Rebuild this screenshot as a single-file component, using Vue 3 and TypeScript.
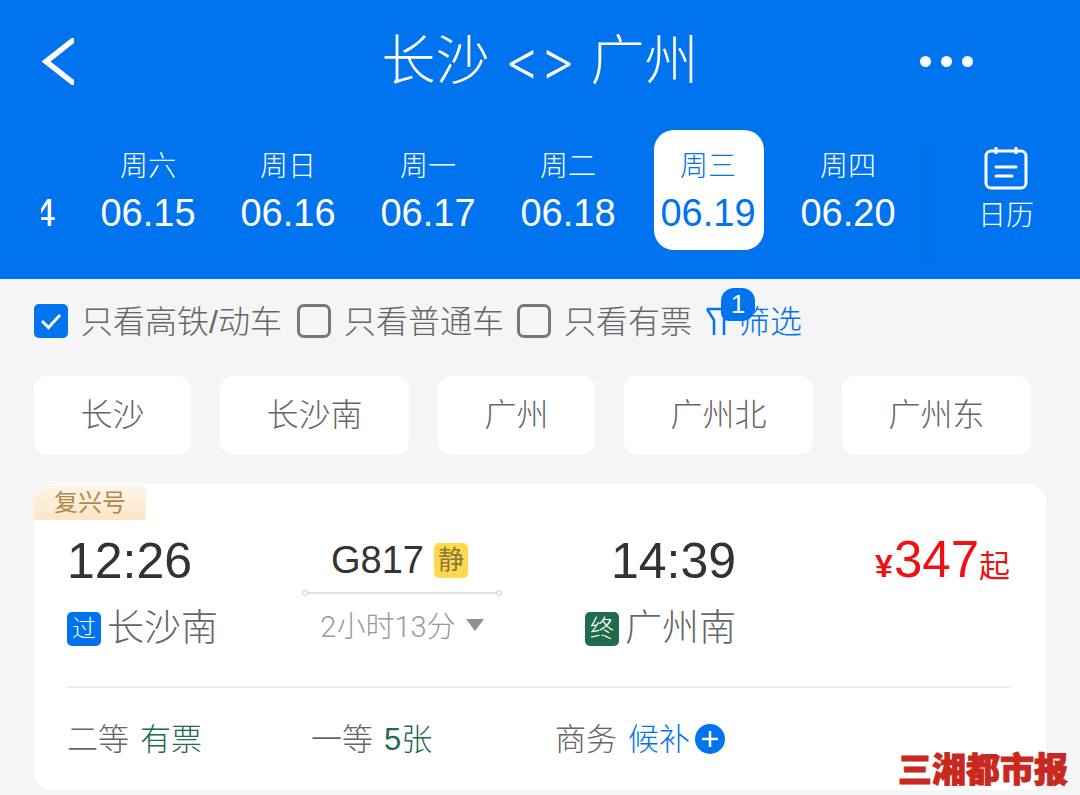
<script setup lang="ts">
import { ref } from 'vue';

const days = [
  { week: '周五', date: '06.14' },
  { week: '周六', date: '06.15' },
  { week: '周日', date: '06.16' },
  { week: '周一', date: '06.17' },
  { week: '周二', date: '06.18' },
  { week: '周三', date: '06.19' },
  { week: '周四', date: '06.20' },
];
const activeDate = ref('06.19');

const filters = [
  { label: '只看高铁/动车', checked: true },
  { label: '只看普通车', checked: false },
  { label: '只看有票', checked: false },
];

const stations = ['长沙', '长沙南', '广州', '广州北', '广州东'];

const seats = [
  { name: '二等', left: '有票', tone: 'green' },
  { name: '一等', left: '5张', tone: 'green' },
  { name: '商务', left: '候补', tone: 'blue' },
];
</script>

<template>
  <div class="page">
    <header class="top">
      <div class="nav">
        <svg class="back" width="36" height="47" viewBox="0 0 36 47">
          <path d="M40 -1.500 L8 23.500 L40 48.500" fill="none" stroke="#fff" stroke-width="5.500" />
        </svg>
        <h1 class="title">长沙 &lt;&gt; 广州</h1>
        <div class="more"><i></i><i></i><i></i></div>
      </div>
      <div class="dates">
        <div class="scroller">
          <div class="track">
            <div v-for="d in days" :key="d.date" class="day" :class="{ on: d.date === activeDate }">
              <span class="week">{{ d.week }}</span>
              <span class="date">{{ d.date }}</span>
            </div>
          </div>
        </div>
        <div class="calendar">
          <svg width="44" height="44" viewBox="0 0 44 44" fill="none" stroke="#fff">
            <rect x="2" y="5" width="40" height="37" rx="5" stroke-width="3" />
            <path d="M12 1v7M32 1v7" stroke-width="3" />
            <path d="M12 21h20M12 30h16" stroke-width="3" stroke-linecap="round" />
          </svg>
          <span>日历</span>
        </div>
      </div>
    </header>

    <main class="body">
      <div class="filters">
        <label v-for="f in filters" :key="f.label" class="check">
          <span class="box" :class="{ on: f.checked }">
            <svg v-if="f.checked" width="24" height="20" viewBox="0 0 24 20">
              <path d="M3 10l6.500 6.500L21 4" fill="none" stroke="#fff" stroke-width="3" />
            </svg>
          </span>
          <span class="label">{{ f.label }}</span>
        </label>
        <div class="screen">
          <svg width="30" height="30" viewBox="0 0 30 30" fill="none" stroke="#0073ee" stroke-width="2.500">
            <path d="M2 3H28L19 14V29M2 3L9 14V29" />
          </svg>
          <span class="label">筛选</span>
          <b class="bubble">1</b>
        </div>
      </div>

      <div class="stations">
        <div v-for="s in stations" :key="s" class="station">{{ s }}</div>
      </div>

      <section class="card">
        <div class="tag">复兴号</div>
        <div class="trip">
          <div class="stop">
            <div class="time">12:26</div>
            <div class="place"><em class="mark pass">过</em>长沙南</div>
          </div>
          <div class="middle">
            <div class="code">G817<em class="quiet">静</em></div>
            <div class="line"></div>
            <div class="span">2小时13分<i class="arrow"></i></div>
          </div>
          <div class="stop end">
            <div class="time">14:39</div>
            <div class="place"><em class="mark last">终</em>广州南</div>
          </div>
          <div class="price"><small>¥</small>347<span>起</span></div>
        </div>
        <div class="seats">
          <div v-for="s in seats" :key="s.name" class="seat">
            <span>{{ s.name }}</span>
            <span :class="s.tone">{{ s.left }}</span>
            <svg v-if="s.tone === 'blue'" class="plus" width="30" height="30" viewBox="0 0 30 30">
              <circle cx="15" cy="15" r="15" fill="#0073ee" />
              <path d="M7 15h16M15 7v16" stroke="#fff" stroke-width="2.500" />
            </svg>
          </div>
        </div>
      </section>
    </main>

    <div class="stamp">三湘都市报</div>
  </div>
</template>

<style scoped>
.page {
  position: relative;
  height: 795px;
  overflow: hidden;
  background: #f5f5f5;
  font-family: "Liberation Sans", "Noto Sans CJK SC", sans-serif;
  color: #666;
}

.top {
  height: 279px;
  background: #0073ee;
  color: #fff;
}

.nav {
  display: grid;
  grid-template-columns: 1fr auto 1fr;
  align-items: center;
  height: 122px;
  padding: 0 38px;
}

.back {
  display: block;
}

.title {
  margin: 0;
  font-family: Inter, "Noto Sans CJK SC", sans-serif;
  font-size: 54px;
  font-weight: 300;
  line-height: 122px;
}

.more {
  display: flex;
  gap: 10px;
  justify-self: end;
  margin-right: 69px;
}

.more i {
  width: 11px;
  height: 11px;
  border-radius: 50%;
  background: #fff;
}

.dates {
  display: flex;
  height: 130px;
  margin-top: 8px;
}

.scroller {
  position: relative;
  width: 889px;
  margin-left: 41px;
  overflow: hidden;
}

.scroller::after {
  content: "";
  position: absolute;
  top: 15px;
  right: 0;
  bottom: 0;
  width: 14px;
  background: linear-gradient(to right, rgba(0, 90, 200, 0), rgba(0, 90, 200, 0.12));
}

.track {
  display: flex;
  margin-left: -102px;
}

.day {
  flex: 0 0 110px;
  box-sizing: border-box;
  display: flex;
  flex-direction: column;
  align-items: center;
  height: 120px;
  margin: 0 15px;
  padding-right: 2px;
  border-radius: 20px;
  white-space: nowrap;
}

.day.on {
  background: #fff;
  color: #0073ee;
}

.week {
  margin-top: 17px;
  font-size: 28px;
  font-weight: 300;
  line-height: 40px;
}

.date {
  margin-top: 3px;
  font-size: 38px;
  line-height: 46px;
}

.calendar {
  flex: 1;
  display: flex;
  flex-direction: column;
  align-items: center;
  padding: 16px 0 0 2px;
  font-size: 28px;
  font-weight: 300;
}

.calendar span {
  line-height: 40px;
  margin-top: 6px;
}

.body {
  padding: 0 34px;
}

.filters {
  display: flex;
  align-items: center;
  height: 34px;
  margin-top: 25px;
  font-size: 32px;
  font-weight: 300;
}

.label {
  margin-top: -5px;
}

.check {
  display: flex;
  align-items: center;
  gap: 13px;
  margin-right: 13px;
}

.check:first-child {
  margin-right: 15px;
}

.box {
  display: flex;
  align-items: center;
  justify-content: center;
  box-sizing: border-box;
  width: 34px;
  height: 34px;
  border: 3px solid #777;
  border-radius: 7px;
}

.box.on {
  border: 0;
  border-radius: 5px;
  background: #0073ee;
}

.screen {
  position: relative;
  display: flex;
  align-items: center;
  gap: 3px;
  color: #0073ee;
}

.bubble {
  position: absolute;
  top: -13px;
  left: 16px;
  width: 34px;
  height: 33px;
  border-radius: 13px 13px 13px 8px;
  background: #0073ee;
  color: #fff;
  font-size: 26px;
  font-weight: 400;
  line-height: 33px;
  text-align: center;
}

.stations {
  display: flex;
  justify-content: space-between;
  width: 997px;
  margin-top: 38px;
}

.station {
  height: 79px;
  padding: 0 46.500px;
  border-radius: 14px;
  background: #fff;
  font-size: 32px;
  font-weight: 300;
  line-height: 79px;
}

.card {
  position: relative;
  height: 306px;
  margin-top: 29px;
  padding: 0 36px 0 33px;
  border-radius: 18px;
  background: #fff;
}

.tag {
  position: absolute;
  top: 1px;
  left: 0;
  width: 112px;
  height: 35px;
  border-radius: 16px 0 3px 0;
  background: linear-gradient(#fdf6ea, #fde5c5);
  color: #b08a4d;
  font-size: 24px;
  line-height: 35px;
  text-align: center;
}

.trip {
  display: grid;
  grid-template-columns: 235px 200px 234px 1fr;
  height: 204px;
  padding-top: 52px;
  box-sizing: border-box;
  border-bottom: 2px solid #f0ecee;
}

.stop.end {
  display: flex;
  flex-direction: column;
  align-items: flex-end;
}

.time {
  color: #333;
  font-size: 50px;
  line-height: 50px;
}

.place {
  display: flex;
  align-items: center;
  gap: 6px;
  margin-top: 18px;
  font-size: 37px;
  font-weight: 300;
  line-height: 50px;
}

.mark {
  width: 34px;
  height: 34px;
  border-radius: 5px;
  color: #fff;
  font-size: 24px;
  font-style: normal;
  font-weight: 300;
  line-height: 34px;
  text-align: center;
}

.mark.pass {
  background: #0073ee;
}

.mark.last {
  background: #1f6b4b;
}

.middle {
  display: flex;
  flex-direction: column;
  align-items: center;
}

.code {
  display: flex;
  align-items: center;
  gap: 10px;
  height: 46px;
  margin-top: 1px;
  margin-left: -5px;
  color: #333;
  font-size: 38px;
}

.quiet {
  width: 34px;
  height: 35px;
  border-radius: 5px;
  background: #ffd84d;
  color: #8a7a3a;
  font-size: 26px;
  font-style: normal;
  line-height: 35px;
  text-align: center;
}

.line {
  position: relative;
  align-self: stretch;
  height: 2px;
  margin-top: 9px;
  background: #e2e2e2;
}

.line::before,
.line::after {
  content: "";
  position: absolute;
  top: -2px;
  box-sizing: border-box;
  width: 6px;
  height: 6px;
  border: 1px solid #ccc;
  border-radius: 50%;
  background: #fff;
}

.line::before {
  left: 0;
}

.line::after {
  right: 0;
}

.span {
  display: flex;
  align-items: center;
  gap: 10px;
  margin-top: 14px;
  color: #999;
  font-family: Roboto, "Noto Sans CJK SC", sans-serif;
  font-size: 29px;
  font-weight: 300;
  line-height: 38px;
}

.arrow {
  width: 0;
  height: 0;
  border-top: 12px solid #909090;
  border-left: 9px solid transparent;
  border-right: 9px solid transparent;
  margin-top: -4px;
}

.price {
  justify-self: end;
  margin-top: -1px;
  color: #ee1111;
  font-size: 51px;
  line-height: 50px;
  white-space: nowrap;
}

.price small {
  margin-right: 1px;
  font-size: 32px;
  font-weight: 700;
}

.price span {
  font-size: 31px;
}

.seats {
  display: grid;
  grid-template-columns: 244px 244px 1fr;
  height: 100px;
  align-items: center;
}

.seat {
  display: flex;
  align-items: center;
  gap: 11px;
  font-size: 31px;
  font-weight: 300;
}

.seat span {
  margin-top: -3px;
}

.green {
  color: #1f6b4b;
}

.blue {
  color: #0073ee;
}

.plus {
  margin: 1px 0 0 -6px;
}

.stamp {
  position: absolute;
  right: 12px;
  bottom: 3px;
  color: #c8281e;
  font-size: 34px;
  font-weight: 900;
  line-height: 44px;
  -webkit-text-stroke: 1px #c8281e;
}
</style>

<style>
body {
  background: #f5f5f5;
}
</style>
